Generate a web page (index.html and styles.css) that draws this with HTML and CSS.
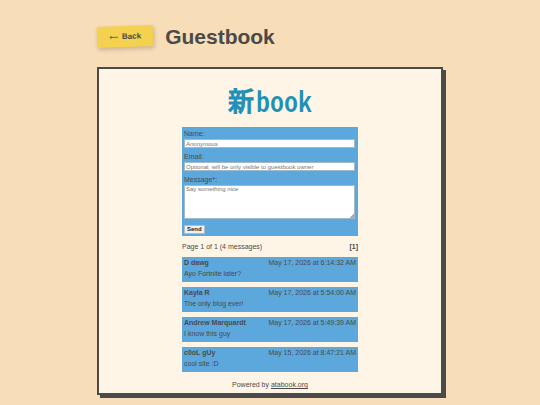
FILE: index.html
```html
<!DOCTYPE html>
<html lang="en">
<head>
  <meta charset="UTF-8">
  <meta name="viewport" content="width=device-width, initial-scale=1.0">
  <title>Guestbook</title>
  <link rel="stylesheet" href="styles.css">
</head>
<body>
  <div class="page">
    <header>
      <a href="#" class="back-btn"><svg class="arrow" viewBox="0 0 18 10" aria-hidden="true"><path d="M18 6H2M5 3L2 6L5 9"/></svg>Back</a>
      <h1>Guestbook</h1>
    </header>

    <main class="frame">
      <div class="guestbook">
        <div class="logo" lang="ja"><span class="kanji">新</span>book</div>

        <!-- New message form -->
        <form class="entry-form">
          <div class="field">
            <label for="name">Name:</label>
            <input type="text" id="name" placeholder="Anonymous">
          </div>
          <div class="field">
            <label for="email">Email:</label>
            <input type="email" id="email" placeholder="Optional, will be only visible to guestbook owner">
          </div>
          <div class="field">
            <label for="message">Message*:</label>
            <textarea id="message" placeholder="Say something nice"></textarea>
          </div>
          <button type="submit">Send</button>
        </form>

        <div class="pagination">
          <span>Page 1 of 1 (4 messages)</span>
          <b>[1]</b>
        </div>

        <!-- Messages -->
        <div class="messages">
          <article class="message">
            <div class="message-head"><b>D dawg</b><time>May 17, 2026 at 6:14:32 AM</time></div>
            <p>Ayo Fortnite later?</p>
          </article>
          <article class="message">
            <div class="message-head"><b>Kayla R</b><time>May 17, 2026 at 5:54:00 AM</time></div>
            <p>The only blog ever!</p>
          </article>
          <article class="message">
            <div class="message-head"><b>Andrew Marquardt</b><time>May 17, 2026 at 5:49:39 AM</time></div>
            <p>I know this guy</p>
          </article>
          <article class="message">
            <div class="message-head"><b>c0oL gUy</b><time>May 15, 2026 at 8:47:21 AM</time></div>
            <p>cool site :D</p>
          </article>
        </div>

        <footer>Powered by <a href="#">atabook.org</a></footer>
      </div>
    </main>
  </div>
</body>
</html>
```
FILE: styles.css
```css
* {
  margin: 0;
  padding: 0;
  box-sizing: border-box;
}

body {
  font-family: "Liberation Sans", Arial, sans-serif;
  font-size: 7px;
  line-height: 9px;
  background: #f7ddb8;
  color: #4a4a4a;
}

.page {
  max-width: 346px;
  margin: 0 auto;
  padding: 24px 0 10px;
}

/* Header */
header {
  display: flex;
  align-items: center;
  gap: 12px;
  margin-bottom: 18px;
}
h1 {
  font-size: 21px;
  line-height: 25px;
}
.back-btn {
  display: flex;
  align-items: center;
  gap: 4px;
  padding: 6px 12px;
  font-size: 8px;
  font-weight: bold;
  color: #4a4a4a;
  text-decoration: none;
  background: #f4d24f;
  box-shadow: 1px 2px 4px rgba(0, 0, 0, 0.2);
  transform: rotate(-2deg);
}
.arrow {
  width: 9px;
  height: 5px;
  fill: none;
  stroke: #4a4a4a;
  stroke-width: 1.5;
}

/* Guestbook frame */
.frame {
  padding: 15px 16px 4px;
  background: #fff5e6;
  border: 2px solid #4a4a4a;
  box-shadow: 3px 3px 0 #4a4a4a;
}
.guestbook {
  max-width: 176px;
  margin: 0 auto;
}
.logo {
  display: flex;
  justify-content: center;
  gap: 2px;
  margin-bottom: 11px;
  font-family: "Noto Sans CJK JP", sans-serif;
  font-size: 28px;
  font-weight: 500;
  font-feature-settings: "hwid";
  line-height: 32px;
  color: #1f90b9;
}
.kanji {
  font-size: 26px;
  -webkit-text-stroke: 1px #1f90b9;
}

/* Form */
.entry-form {
  padding: 2px 3px 2px 2px;
  background: #5ca7dc;
}
.field {
  margin-bottom: 4px;
}
.field label {
  display: block;
  margin-bottom: 1px;
}
input,
textarea {
  display: block;
  width: 100%;
  padding: 0 1px;
  font-family: inherit;
  font-size: 6px;
  line-height: 7px;
  background: #fff;
  border: 1px solid #a3b9c8;
}
input {
  height: 9px;
}
textarea {
  height: 34px;
}
textarea::-webkit-resizer {
  background: linear-gradient(135deg, transparent 50%, #aaa 50%) right bottom / 4px 4px no-repeat;
}
::placeholder {
  color: #757575;
}
button {
  display: block;
  margin-top: 6px;
  padding: 0 2px;
  font-family: inherit;
  font-size: 6px;
  font-weight: bold;
  line-height: 7px;
  color: #222;
  background: #efefef;
  border: 1px solid #bbb;
}

.pagination {
  display: flex;
  justify-content: space-between;
  margin: 6px 0;
}

/* Messages */
.messages {
  display: grid;
  gap: 5px;
}
.message {
  padding: 1px 2px 4px;
  background: #5ca7dc;
}
.message-head {
  display: flex;
  justify-content: space-between;
  margin-bottom: 2px;
}

footer {
  margin-top: 8px;
  text-align: center;
}
footer a {
  color: inherit;
}
```
